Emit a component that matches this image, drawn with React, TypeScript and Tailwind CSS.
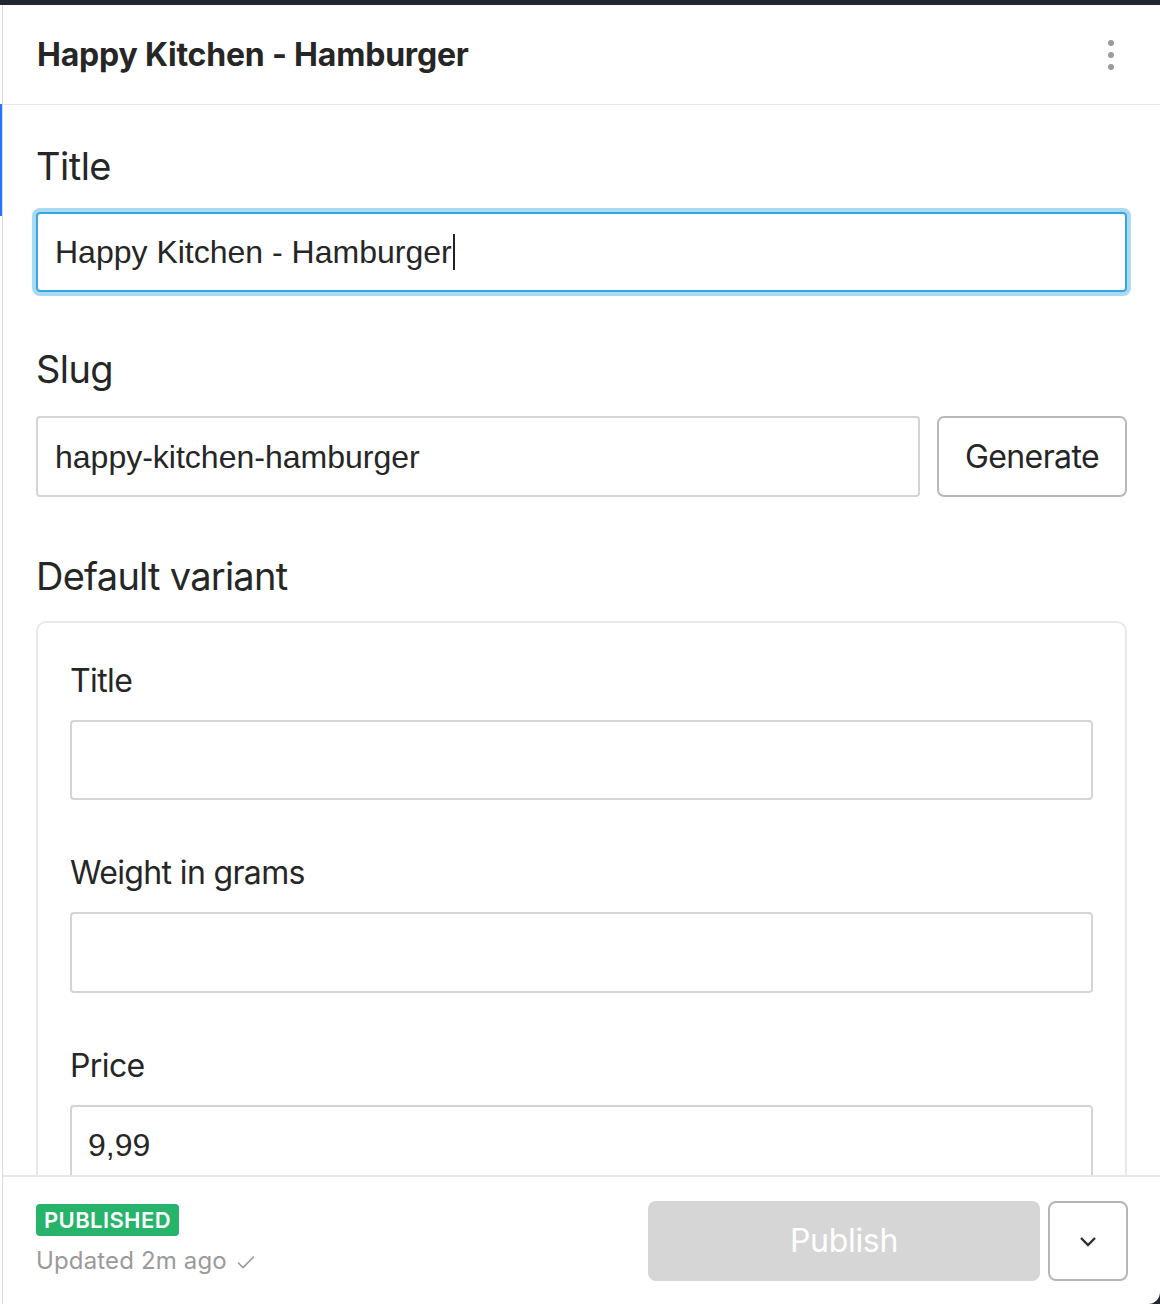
import React from "react";

const font = { fontFamily: "Inter, 'Noto Sans', sans-serif" };
const inputFont = { fontFamily: "'Liberation Sans', Arial, sans-serif" };

function Label({ children, className = "" }: { children: React.ReactNode; className?: string }) {
  return <div className={"leading-none text-[#262626] " + className}>{children}</div>;
}

export default function App() {
  return (
    <div className="w-[1160px] h-[1304px] bg-[#20272e] flex flex-col pt-[5px]" style={font}>
      <div className="flex-1 flex flex-row bg-white rounded-br-[12px] overflow-hidden min-h-0">
        {/* left strip */}
        <div className="w-[3px] shrink-0 border-r border-[#dcdcdc] flex flex-col">
          <div className="h-[99px]" />
          <div className="h-[112px] w-[2px] bg-[#2276fc]" />
        </div>
        <div className="flex-1 flex flex-col min-w-0">
          {/* header */}
          <div className="h-[100px] shrink-0 border-b border-[#e6e6e6] flex items-center justify-between pl-[34px] pr-[46px]">
            <div className="text-[32px] font-bold leading-none text-[#262626] tracking-[-0.2px]">Happy Kitchen - Hamburger</div>
            <svg width="6" height="32" viewBox="0 0 6 32" className="mt-[1px]">
              <circle cx="3" cy="4" r="3" fill="#9b9b9b" />
              <circle cx="3" cy="16" r="3" fill="#9b9b9b" />
              <circle cx="3" cy="28" r="3" fill="#9b9b9b" />
            </svg>
          </div>
          {/* content */}
          <div className="flex-1 min-h-0 overflow-hidden px-[33px]">
            <Label className="text-[38px] tracking-[-0.5px] mt-[42px]">Title</Label>
            <div
              className="mt-[27px] h-[80px] rounded-[4px] border-2 border-[#37a4e4] shadow-[0_0_0_4px_#a8daf2] flex items-center pl-[17px] text-[32px] text-[#262626]"
              style={inputFont}
            >
              <span className="leading-none">Happy Kitchen - Hamburger</span>
              <span className="w-[2px] h-[36px] bg-[#222] ml-[1px]" />
            </div>
            <Label className="text-[38px] tracking-[-0.6px] mt-[58px]">Slug</Label>
            <div className="mt-[28px] flex flex-row gap-[17px] h-[81px]">
              <div
                className="flex-1 rounded-[4px] border-2 border-[#d4d4d4] flex items-center pl-[17px] text-[32px] text-[#262626] leading-none"
                style={inputFont}
              >
                happy-kitchen-hamburger
              </div>
              <div className="w-[190px] rounded-[7px] border-2 border-[#b8b8b8] flex items-center justify-center text-[32px] tracking-[-0.6px] text-[#262626] leading-none">
                Generate
              </div>
            </div>
            <Label className="text-[38px] tracking-[-0.75px] mt-[60px]">Default variant</Label>
            <div className="mt-[26px] border-2 border-[#e8e8e8] rounded-[10px] px-[32px] pt-[42px] pb-[40px]">
              <Label className="text-[32px] tracking-[-0.6px]">Title</Label>
              <div className="mt-[23px] h-[80px] rounded-[4px] border-2 border-[#d4d4d4]" />
              <Label className="text-[32px] tracking-[-0.65px] mt-[57px]">Weight in grams</Label>
              <div className="mt-[23px] h-[81px] rounded-[4px] border-2 border-[#d4d4d4]" />
              <Label className="text-[32px] tracking-[-0.6px] mt-[57px]">Price</Label>
              <div
                className="mt-[23px] h-[80px] rounded-[4px] border-2 border-[#d4d4d4] flex items-center pl-[16px] text-[32px] text-[#262626] leading-none"
                style={inputFont}
              >
                9,99
              </div>
            </div>
          </div>
          {/* footer */}
          <div className="h-[129px] shrink-0 border-t-2 border-[#e6e6e6] flex flex-row items-center justify-between pl-[33px] pr-[32px]">
            <div className="flex flex-col self-start pt-[27px]">
              <div className="self-start h-[32px] px-[8px] rounded-[4px] bg-[#25b46a] text-white text-[22px] font-semibold tracking-[0.4px] leading-none flex items-center">
                PUBLISHED
              </div>
              <div className="mt-[13px] text-[24px] tracking-[0.15px] leading-none text-[#9a9a9a] flex items-center">
                Updated 2m ago
                <svg width="20" height="16" viewBox="0 0 20 16" fill="none" className="ml-[9px] mt-[2px]">
                  <path d="M2 8.5 L7 13.5 L18 2.5" stroke="#9a9a9a" strokeWidth="1.6" />
                </svg>
              </div>
            </div>
            <div className="flex flex-row gap-[8px]">
              <div className="w-[392px] h-[80px] rounded-[8px] bg-[#d6d6d6] text-white text-[32px] tracking-[-0.3px] leading-none flex items-center justify-center">
                Publish
              </div>
              <div className="w-[80px] h-[80px] rounded-[8px] border-2 border-[#b5b5b5] flex items-center justify-center">
                <svg width="20" height="12" viewBox="0 0 20 12" fill="none">
                  <path d="M3 3 L10 10 L17 3" stroke="#2f2f2f" strokeWidth="2.4" />
                </svg>
              </div>
            </div>
          </div>
        </div>
      </div>
    </div>
  );
}
